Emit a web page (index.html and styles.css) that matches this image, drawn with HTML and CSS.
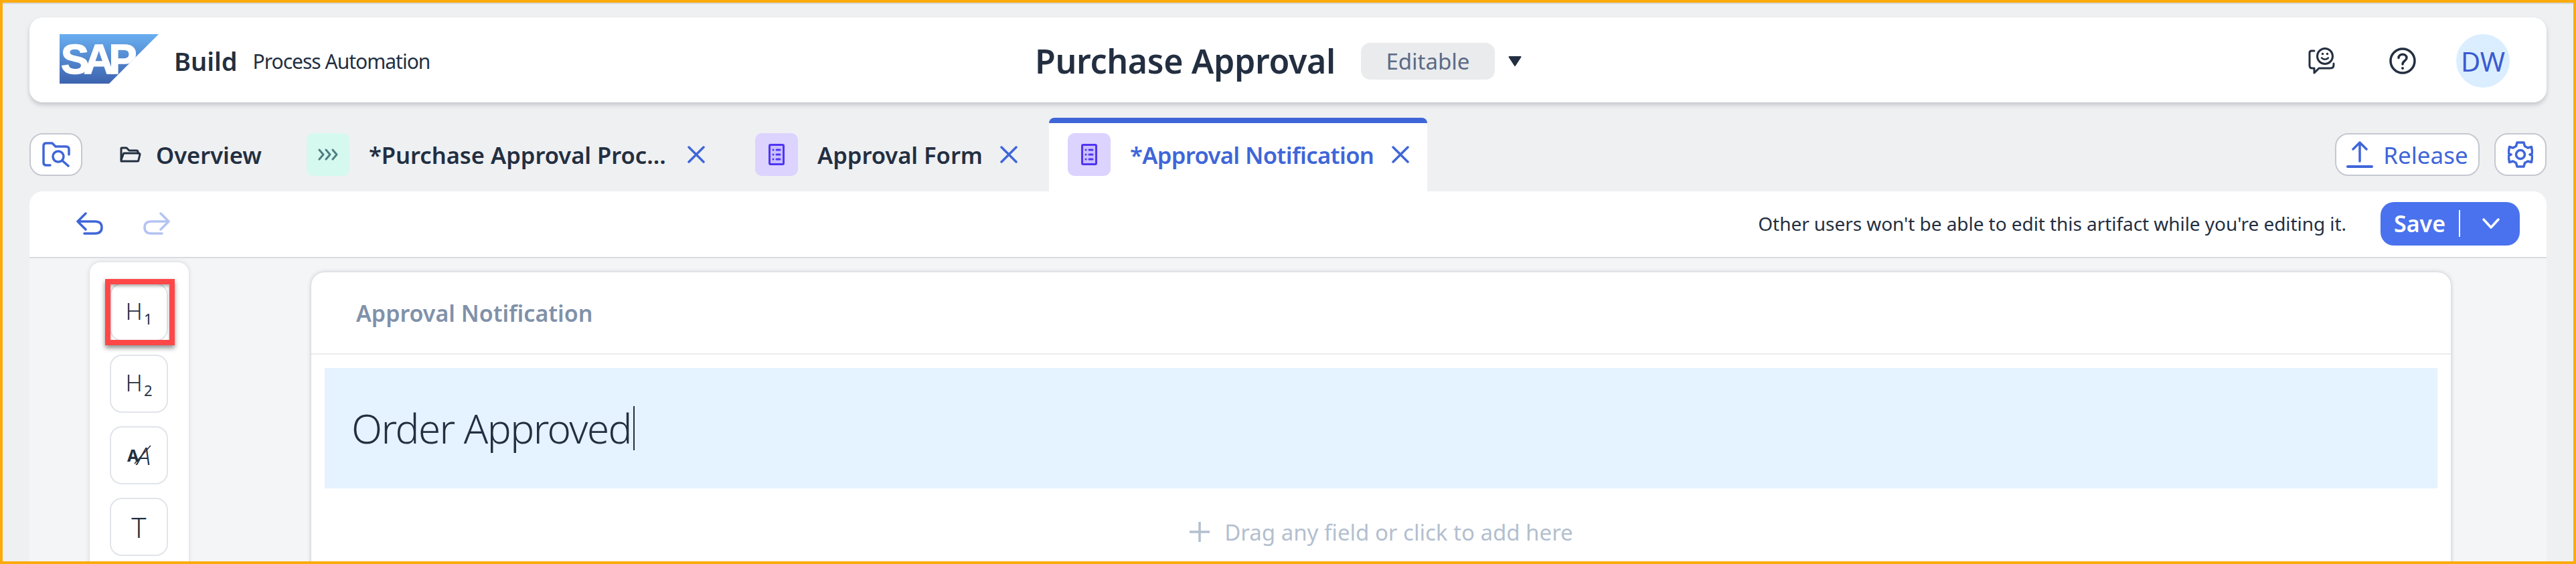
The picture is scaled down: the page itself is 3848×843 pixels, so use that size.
FILE: index.html
```html
<!DOCTYPE html>
<html lang="en">
<head>
  <meta charset="UTF-8" />
  <title>Purchase Approval - SAP Build Process Automation</title>
  <link rel="stylesheet" href="styles.css">
</head>
<body>
  <div class="frame">
    <header class="topbar">
      <div class="brand">
        <div class="logo">SAP</div>
        <span class="brand-name">Build</span>
        <span class="brand-sub">Process Automation</span>
      </div>
      <div class="project">
        <span class="project-name">Purchase Approval</span>
        <span class="pill">Editable</span>
        <svg class="caret-down" width="20" height="15" viewBox="0 0 20 15"><path d="M1.5 1h17L10 14z" fill="#232f41" stroke="#232f41" stroke-width="2" stroke-linejoin="round"/></svg>
      </div>
      <div class="top-actions">
        <svg class="icon-feedback" width="40" height="40" viewBox="0 0 40 40" fill="none" stroke="#232f41" stroke-width="3" stroke-linecap="round" stroke-linejoin="round">
          <path d="M9 5H5Q2 5 2 8V27Q2 31 6 31H9V38L16 31H33Q38 31 38 26V24"/>
          <circle cx="25" cy="13" r="11.5"/>
          <path d="M20 15.5Q25 20 30 15.5" stroke-width="2.5"/>
          <path d="M21.5 9.5v.1M28.5 9.5v.1" stroke-width="3.5"/>
        </svg>
        <svg class="icon-help" width="40" height="40" viewBox="0 0 40 40" fill="none" stroke="#232f41" stroke-width="3.5" stroke-linecap="round" stroke-linejoin="round">
          <circle cx="20" cy="20" r="18"/>
          <path d="M14 15.5C14 8.5 26 8.5 26 15.5C26 20 20 20 20 25"/>
          <path d="M20 31v.1" stroke-width="4"/>
        </svg>
        <div class="avatar">DW</div>
      </div>
    </header>

    <nav class="tabbar">
      <button class="btn-outline btn-search">
        <svg width="42" height="38" viewBox="0 0 42 38" fill="none" stroke="#3f66d8" stroke-width="3.5" stroke-linecap="round" stroke-linejoin="round">
          <path d="M12 35H6Q2 35 2 31V6Q2 2 6 2H15L20 7H35Q40 7 40 11V19"/>
          <circle cx="24" cy="22" r="8"/>
          <path d="M30 28L39 36"/>
        </svg>
      </button>
      <div class="tab tab-overview">
        <svg width="33" height="24" viewBox="0 0 33 24" fill="none" stroke="#232f41" stroke-width="3" stroke-linecap="round" stroke-linejoin="round">
          <path d="M3 20V3Q3 2 4 2H11L15 6H26Q28 6 28 8V10"/>
          <path d="M3 22H27Q29 22 29 20L31 12Q31 10 29 10H8Q6 10 6 12L3 20"/>
        </svg>
        <span class="tab-label">Overview</span>
      </div>
      <div class="tab tab-process">
        <span class="tab-icon tab-icon-green">
          <svg width="30" height="18" viewBox="0 0 30 18" fill="none" stroke="#4f7f85" stroke-width="3" stroke-linecap="round" stroke-linejoin="round">
            <path d="M2 2l6 7-6 7M12 2l6 7-6 7M22 2l6 7-6 7"/>
          </svg>
        </span>
        <span class="tab-label">*Purchase Approval Proc...</span>
        <svg class="tab-close" width="26" height="26" viewBox="0 0 26 26"><path d="M2 2L24 24M24 2L2 24"/></svg>
      </div>
      <div class="tab tab-form">
        <span class="tab-icon tab-icon-purple">
          <svg width="24" height="32" viewBox="0 0 24 32" fill="#cabfff" stroke="#4f35f3" stroke-width="3" stroke-linecap="round" stroke-linejoin="round">
            <rect x="1.5" y="1.5" width="21" height="29" rx="1.5"/>
            <path d="M7 9v.1M7 16v.1M7 23v.1M12 9h5M12 16h5M12 23h5"/>
          </svg>
        </span>
        <span class="tab-label">Approval Form</span>
        <svg class="tab-close" width="26" height="26" viewBox="0 0 26 26"><path d="M2 2L24 24M24 2L2 24"/></svg>
      </div>
      <div class="tab tab-active">
        <span class="tab-icon tab-icon-purple">
          <svg width="24" height="32" viewBox="0 0 24 32" fill="#cabfff" stroke="#4f35f3" stroke-width="3" stroke-linecap="round" stroke-linejoin="round">
            <rect x="1.5" y="1.5" width="21" height="29" rx="1.5"/>
            <path d="M7 9v.1M7 16v.1M7 23v.1M12 9h5M12 16h5M12 23h5"/>
          </svg>
        </span>
        <span class="tab-label">*Approval Notification</span>
        <svg class="tab-close" width="26" height="26" viewBox="0 0 26 26"><path d="M2 2L24 24M24 2L2 24"/></svg>
      </div>
      <div class="tab-actions">
        <button class="btn-outline btn-release">
          <svg width="40" height="40" viewBox="0 0 40 40" fill="none" stroke="#3f66d8" stroke-width="3.5" stroke-linecap="round" stroke-linejoin="round">
            <path d="M20 30V2M10 12L20 2L30 12"/>
            <path d="M2 38H38" stroke-width="4"/>
          </svg>
          <span>Release</span>
        </button>
        <button class="btn-outline btn-settings">
          <svg width="38" height="40" viewBox="0 0 38 40" fill="none" stroke="#3f66d8" stroke-width="3.5" stroke-linejoin="round">
            <path d="M14 2H24L25.5 7.5L30 10L35.500 8.500L37 18L33 20L37 22L35.500 31.500L30 30L25.500 32.500L24 38H14L12.500 32.500L8 30L2.500 31.500L1 22L5 20L1 18L2.500 8.500L8 10L12.500 7.500Z"/>
            <circle cx="19" cy="20" r="6.500"/>
          </svg>
        </button>
      </div>
    </nav>

    <section class="editor">
      <div class="toolbar">
        <svg width="40" height="34" viewBox="0 0 40 34" fill="none" stroke="#3f66d8" stroke-width="3.5" stroke-linecap="round" stroke-linejoin="round">
          <path d="M14 2L2 14L14 26M2 14H28Q38 14 38 23Q38 32 28 32H12"/>
        </svg>
        <svg class="redo" width="40" height="34" viewBox="0 0 40 34" fill="none" stroke="#b4c4f2" stroke-width="3.5" stroke-linecap="round" stroke-linejoin="round">
          <path d="M26 2L38 14L26 26M38 14H12Q2 14 2 23Q2 32 12 32H28"/>
        </svg>
        <span class="lock-note">Other users won't be able to edit this artifact while you're editing it.</span>
        <div class="btn-save">
          <span class="save-label">Save</span>
          <span class="save-divider"></span>
          <svg width="26" height="16" viewBox="0 0 26 16" fill="none" stroke="#fff" stroke-width="3.500" stroke-linecap="round" stroke-linejoin="round"><path d="M2 2L13 14L24 2"/></svg>
        </div>
      </div>

      <div class="canvas">
        <aside class="palette">
          <div class="tool tool-marked">
            <span class="tool-h">H<span class="tool-sub">1</span></span>
            <span class="marker"></span>
          </div>
          <div class="tool"><span class="tool-h">H<span class="tool-sub">2</span></span></div>
          <div class="tool">
            <span class="aa"><span class="aa-bold">A</span><span class="aa-light">A</span></span>
            <svg class="aa-slash" width="30" height="32" viewBox="0 0 30 32"><path d="M3 30L27 3" stroke="#232f41" stroke-width="1.5"/></svg>
          </div>
          <div class="tool tool-t">T</div>
        </aside>

        <main class="form-card">
          <div class="form-title">Approval Notification</div>
          <div class="heading-block">
            <span class="heading-text">Order Approved</span><span class="text-caret"></span>
          </div>
          <div class="drop-hint">
            <svg width="32" height="32" viewBox="0 0 32 32" fill="none" stroke="#b3bfcf" stroke-width="3.500"><path d="M16 1V31M1 16H31"/></svg>
            <span>Drag any field or click to add here</span>
          </div>
        </main>
      </div>
    </section>
  </div>
</body>
</html>
```

FILE: styles.css
```css
* { box-sizing: border-box; }
html, body { margin: 0; height: 100%; }
body { font-family: "Noto Sans", sans-serif; color: #232f41; background: #eff0f2; overflow: hidden; }
svg { display: block; flex: none; }

.frame { position: relative; display: flex; flex-direction: column; height: 843px; padding: 0 40px; border: 4px solid #fbab0c; background: #eff0f2; box-shadow: inset 0 2px 0 #d7d9de; overflow: hidden; }

/* top bar */
.topbar { display: flex; align-items: center; flex: none; height: 127px; margin-top: 22px; padding: 3px 55px 0 45px; background: #fff; border-radius: 20px; box-shadow: 0 4px 6px rgba(70, 78, 95, .25); }
.brand { display: flex; align-items: center; width: 1457px; }
.logo { width: 148px; height: 74px; margin-bottom: 6px; padding-left: 2px; background: linear-gradient(#69aef0, #3d63ae); clip-path: polygon(0 0, 100% 0, 50% 100%, 0 100%); color: #fff; font: bold 63px/74px "Liberation Sans", sans-serif; letter-spacing: -8px; -webkit-text-stroke: 1.5px #fff; }
.brand-name { margin-left: 23px; font-size: 38px; font-weight: 600; }
.brand-sub { margin-left: 23px; font-size: 30px; letter-spacing: -1px; }
.project { display: flex; align-items: center; }
.project-name { font-size: 50px; font-weight: 600; letter-spacing: -.3px; }
.pill { display: flex; align-items: center; justify-content: center; width: 200px; height: 55px; margin-left: 38px; background: #eaebed; border-radius: 14px; color: #5b6a85; font-size: 33px; }
.caret-down { margin-left: 20px; }
.top-actions { display: flex; align-items: center; margin-left: auto; }
.icon-help { margin-left: 81px; }
.avatar { display: flex; align-items: center; justify-content: center; width: 80px; height: 80px; margin-left: 60px; background: #dbeeff; border-radius: 50%; color: #3b5bd0; font-size: 40px; }

/* tabs */
.tabbar { display: flex; align-items: center; flex: none; gap: 20px; height: 110px; margin-top: 23px; }
.btn-outline { display: flex; align-items: center; justify-content: center; height: 64px; padding: 0; background: #fff; border: 2px solid #c5c8d0; border-radius: 20px; font-family: inherit; }
.btn-search { width: 79px; margin-right: 7px; }
.tab { display: flex; align-items: center; height: 110px; padding: 0 27px 0 28px; font-size: 34.5px; font-weight: 600; }
.tab-label { flex: 1; white-space: nowrap; }
.tab-overview { width: 260px; padding-right: 0; }
.tab-overview .tab-label { margin-left: 22px; }
.tab-process { width: 650px; }
.tab-form { width: 447px; }
.tab-active { width: 565px; padding-bottom: 8px; background: #fff; border-top: 8px solid #3f66d8; border-radius: 8px 8px 0 0; color: #3f66d8; }
.tab-active .tab-label { letter-spacing: -.6px; }
.tab-icon { display: flex; align-items: center; justify-content: center; flex: none; width: 64px; height: 64px; margin-right: 29px; border-radius: 10px; }
.tab-icon-green { background: #d5f9ee; }
.tab-icon-purple { background: #dcd3ff; }
.tab-close { fill: none; stroke: #3f66d8; stroke-width: 3.5; stroke-linecap: round; }
.tab-actions { display: flex; gap: 22px; margin-left: auto; }
.btn-release { gap: 15px; width: 216px; color: #3f66d8; font-size: 35px; }
.btn-settings { width: 78px; }

/* editor */
.editor { display: flex; flex-direction: column; flex: 1; min-height: 0; border-radius: 20px 20px 0 0; overflow: hidden; }
.toolbar { display: flex; align-items: center; flex: none; height: 100px; padding: 0 40px 2px 70px; background: #fff; border-bottom: 2px solid #d9dbe0; }
.redo { margin-left: 60px; }
.lock-note { margin-left: auto; font-size: 28px; letter-spacing: -.06px; }
.btn-save { display: flex; align-items: center; width: 208px; height: 65px; margin-left: 51px; padding-left: 20px; background: #4a72ee; border-radius: 20px; color: #fff; font-size: 34px; font-weight: 600; }
.save-label { width: 97px; }
.save-divider { width: 2px; height: 40px; margin-right: 33px; background: #fff; }

.canvas { display: flex; align-items: flex-start; flex: 1; min-height: 0; padding-left: 90px; background: #f4f5f7; overflow: hidden; }
.palette { display: flex; flex-direction: column; flex: none; gap: 20px; width: 148px; margin-top: 6px; padding: 31px 30px 40px; background: #fff; border-radius: 16px; box-shadow: 0 0 6px rgba(70, 78, 95, .2); }
.tool { position: relative; display: flex; align-items: center; justify-content: center; width: 87px; height: 87px; background: #fff; border: 2px solid #e1e4ea; border-radius: 18px; }
.tool-h { font-size: 35px; font-weight: 300; line-height: 1; }
.tool-sub { font-size: 22px; font-weight: 400; vertical-align: -7px; margin-left: 2px; }
.tool-t { font-size: 42px; font-weight: 300; }
.aa { line-height: 1; white-space: nowrap; }
.aa-bold { font-size: 25px; font-weight: 700; vertical-align: 5px; }
.aa-light { margin-left: -3px; font-size: 37px; font-style: italic; font-weight: 300; }
.aa-slash { position: absolute; left: 32px; top: 24px; }
.marker { position: absolute; left: -9px; top: -8px; width: 104px; height: 99px; border: 8px solid #ff4747; box-shadow: 0 4px 7px rgba(0, 0, 0, .45), inset 0 3px 4px rgba(0, 0, 0, .3); }

.form-card { flex: none; width: 3196px; height: 560px; margin: 21px 0 0 183px; background: #fff; border-radius: 20px 20px 0 0; box-shadow: 0 0 6px rgba(70, 78, 95, .3); }
.form-title { display: flex; align-items: center; height: 123px; padding-left: 67px; border-bottom: 2px solid #ececee; color: #8091a9; font-size: 34px; font-weight: 600; }
.heading-block { display: flex; align-items: center; height: 180px; margin: 20px 20px 0; padding-left: 40px; background: #e5f2ff; }
.heading-text { font-size: 60px; font-weight: 300; letter-spacing: -1.5px; }
.text-caret { width: 2px; height: 66px; margin-left: 3px; background: #232f41; }
.drop-hint { display: flex; align-items: center; justify-content: center; gap: 21px; height: 130px; color: #b3bfcf; font-size: 33px; }
```
